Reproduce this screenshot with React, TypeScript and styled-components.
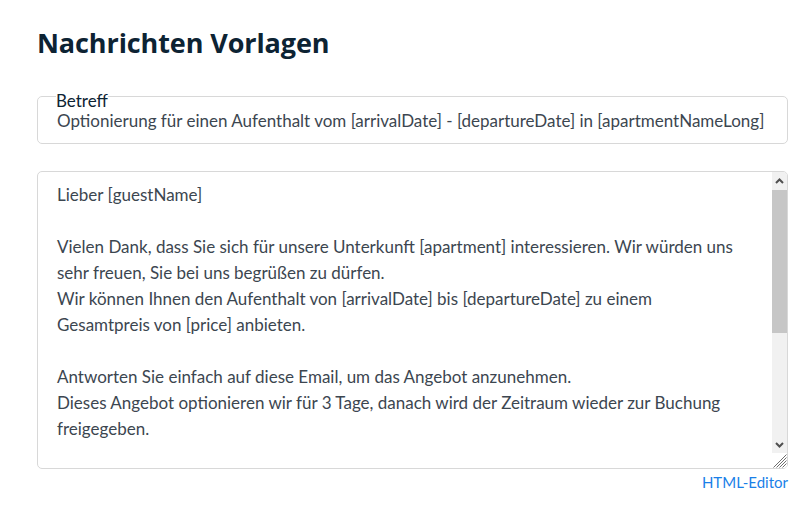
import React from "react";
import styled, { createGlobalStyle } from "styled-components";

const Global = createGlobalStyle`
  html, body { margin: 0; padding: 0; background: #ffffff; }
  body { font-family: "Lato", "Open Sans", sans-serif; }
`;

const Page = styled.div`
  padding: 26px 7px 0 37px;
  display: flex;
  flex-direction: column;
`;

const Title = styled.h1`
  margin: 0;
  font-family: "Open Sans", sans-serif;
  font-weight: 700;
  font-size: 27px;
  line-height: 34px;
  letter-spacing: -0.1px;
  color: #0d2333;
`;

const Fieldset = styled.fieldset`
  margin: 23px 0 0 0;
  padding: 1px 19px 12px 19px;
  border: 1px solid #d8d8d8;
  border-radius: 5px;
  min-width: 0;
`;

const Legend = styled.legend`
  padding: 8px 0 0 0;
  margin-left: -1px;
  font-size: 17px;
  line-height: 19px;
  color: #0d2333;
`;

const SubjectInput = styled.input`
  display: block;
  width: 100%;
  border: none;
  outline: none;
  padding: 0;
  margin: 0;
  font-family: inherit;
  font-size: 17px;
  line-height: 20px;
  height: 20px;
  color: #3c4650;
  background: transparent;
`;

const EditorWrap = styled.div`
  position: relative;
  margin-top: 27px;
  height: 298px;
`;

const Body = styled.textarea`
  display: block;
  box-sizing: border-box;
  width: 100%;
  height: 100%;
  border: 1px solid #d8d8d8;
  border-radius: 5px;
  padding: 10px 43px 10px 19px;
  margin: 0;
  font-family: "Lato", sans-serif;
  font-size: 17px;
  line-height: 26px;
  color: #3c4650;
  outline: none;
  resize: none;
  overflow: hidden;
`;

const ScrollBar = styled.div`
  position: absolute;
  top: 1px;
  right: 1px;
  bottom: 16px;
  width: 15px;
  background: #f1f1f1;
  display: flex;
  flex-direction: column;
  border-top-right-radius: 4px;
  overflow: hidden;
`;

const ArrowButton = styled.div`
  height: 17px;
  flex: 0 0 17px;
  display: flex;
  align-items: center;
  justify-content: center;
`;

const Track = styled.div`
  flex: 1;
  padding-top: 1px;
`;

const Thumb = styled.div`
  height: 143px;
  background: #c6c6c6;
`;

const Corner = styled.div`
  position: absolute;
  right: 1px;
  bottom: 1px;
  width: 15px;
  height: 15px;
  background: #ffffff;
  border-bottom-right-radius: 4px;
  display: flex;
`;

const LinkRow = styled.div`
  display: flex;
  justify-content: flex-end;
  margin-top: 3px;
`;

const Link = styled.a`
  font-size: 15px;
  line-height: 20px;
  color: #1a7fe8;
  text-decoration: none;
  cursor: pointer;
`;

const text = `Lieber [guestName]

Vielen Dank, dass Sie sich für unsere Unterkunft [apartment] interessieren. Wir würden uns sehr freuen, Sie bei uns begrüßen zu dürfen.
Wir können Ihnen den Aufenthalt von [arrivalDate] bis [departureDate] zu einem Gesamtpreis von [price] anbieten.

Antworten Sie einfach auf diese Email, um das Angebot anzunehmen.
Dieses Angebot optionieren wir für 3 Tage, danach wird der Zeitraum wieder zur Buchung freigegeben.

Wir freuen uns auf Ihre Antwort.

Mit freundlichen Grüßen
[hostName]`;

const Chevron = ({ up }: { up?: boolean }) => (
  <svg width="9" height="6" viewBox="0 0 9 6">
    <path
      d={up ? "M1 5 L4.5 1.5 L8 5" : "M1 1 L4.5 4.5 L8 1"}
      fill="none"
      stroke="#505050"
      strokeWidth="2"
    />
  </svg>
);

const Grip = () => (
  <svg width="15" height="15" viewBox="0 0 15 15">
    <path
      d="M14.5 1.5 L1.5 14.5 M14.5 4.5 L4.5 14.5 M14.5 7.5 L7.5 14.5 M14.5 10.5 L10.5 14.5"
      stroke="#6e6e6e"
      strokeWidth="1"
    />
  </svg>
);

export default function App() {
  return (
    <>
      <Global />
      <Page>
        <Title>Nachrichten Vorlagen</Title>
        <Fieldset>
          <Legend>Betreff</Legend>
          <SubjectInput
            readOnly
            value="Optionierung für einen Aufenthalt vom [arrivalDate] - [departureDate] in [apartmentNameLong]"
          />
        </Fieldset>
        <EditorWrap>
          <Body readOnly value={text} />
          <ScrollBar>
            <ArrowButton>
              <Chevron up />
            </ArrowButton>
            <Track>
              <Thumb />
            </Track>
            <ArrowButton>
              <Chevron />
            </ArrowButton>
          </ScrollBar>
          <Corner>
            <Grip />
          </Corner>
        </EditorWrap>
        <LinkRow>
          <Link>HTML-Editor</Link>
        </LinkRow>
      </Page>
    </>
  );
}
